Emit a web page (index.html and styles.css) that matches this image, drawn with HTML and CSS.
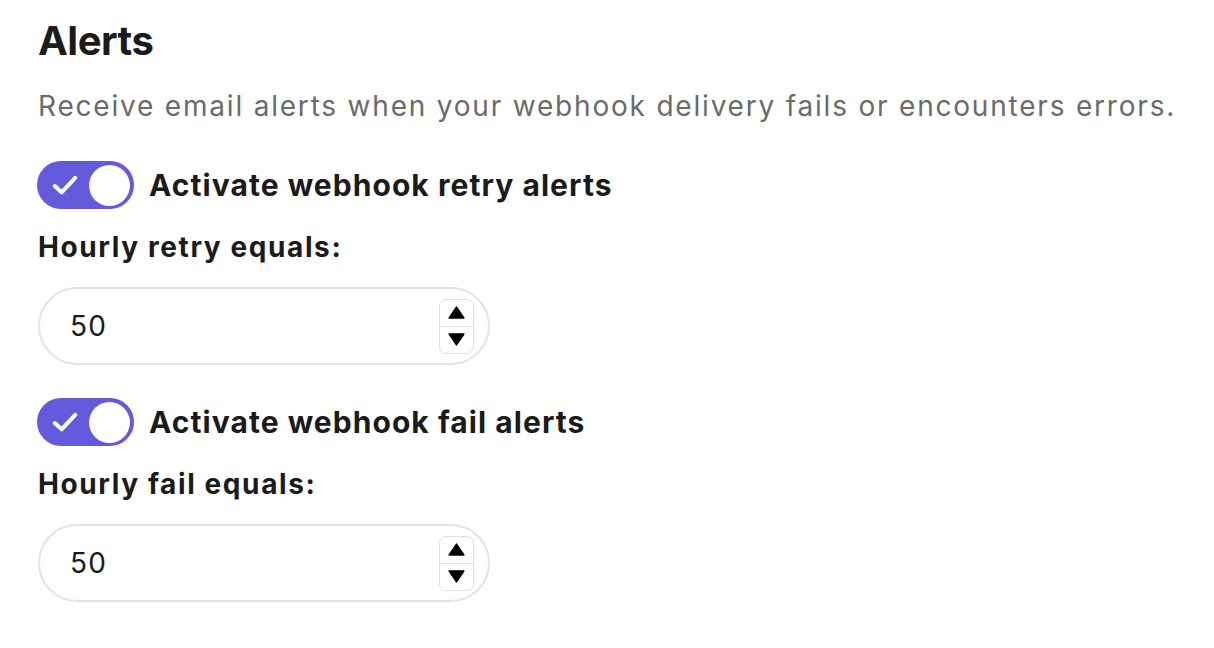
FILE: index.html
```html
<!DOCTYPE html>
<html>
<head>
<meta charset="utf-8">
<link rel="stylesheet" href="styles.css">
</head>
<body>
<section class="alerts">
  <h1 class="title">Alerts</h1>
  <p class="desc">Receive email alerts when your webhook delivery fails or encounters errors.</p>

  <div class="group">
    <div class="toggle-row">
      <span class="toggle">
        <svg class="check" viewBox="0 0 26 20" width="26" height="20"><path d="M2.8 11l6.8 6.3L23.2 2.8" fill="none" stroke="#fff" stroke-width="4" stroke-linecap="round" stroke-linejoin="round"/></svg>
        <span class="knob"></span>
      </span>
      <span class="toggle-label">Activate webhook retry alerts</span>
    </div>
    <div class="field-label">Hourly retry equals:</div>
    <div class="number-input">
      <span class="value">50</span>
      <span class="spinner">
        <span class="spin up"><svg viewBox="0 0 17 13" width="17" height="13"><path d="M8.5 1.2L15.8 12H1.2Z" fill="#000" stroke="#000" stroke-width="1.6" stroke-linejoin="round"/></svg></span>
        <span class="spin down"><svg viewBox="0 0 17 13" width="17" height="13"><path d="M1.2 1H15.8L8.5 11.8Z" fill="#000" stroke="#000" stroke-width="1.6" stroke-linejoin="round"/></svg></span>
      </span>
    </div>
  </div>

  <div class="group">
    <div class="toggle-row">
      <span class="toggle">
        <svg class="check" viewBox="0 0 26 20" width="26" height="20"><path d="M2.8 11l6.8 6.3L23.2 2.8" fill="none" stroke="#fff" stroke-width="4" stroke-linecap="round" stroke-linejoin="round"/></svg>
        <span class="knob"></span>
      </span>
      <span class="toggle-label">Activate webhook fail alerts</span>
    </div>
    <div class="field-label">Hourly fail equals:</div>
    <div class="number-input">
      <span class="value">50</span>
      <span class="spinner">
        <span class="spin up"><svg viewBox="0 0 17 13" width="17" height="13"><path d="M8.5 1.2L15.8 12H1.2Z" fill="#000" stroke="#000" stroke-width="1.6" stroke-linejoin="round"/></svg></span>
        <span class="spin down"><svg viewBox="0 0 17 13" width="17" height="13"><path d="M1.2 1H15.8L8.5 11.8Z" fill="#000" stroke="#000" stroke-width="1.6" stroke-linejoin="round"/></svg></span>
      </span>
    </div>
  </div>
</section>
</body>
</html>
```

FILE: styles.css
```css
* { box-sizing: border-box; }
html, body { margin: 0; padding: 0; background: #fff; }
body {
  font-family: Inter, "Noto Sans", "Liberation Sans", sans-serif;
  color: #1b1b1b;
}
.alerts {
  padding: 17px 37px;
  display: flex;
  flex-direction: column;
}
.title {
  margin: 0 0 0 1px;
  font-size: 40px;
  line-height: 48px;
  font-weight: 700;
  letter-spacing: -0.5px;
}
.desc {
  margin: 21px 0 0 1px;
  font-size: 28px;
  line-height: 40px;
  color: #6b6b6b;
  font-weight: 400;
  letter-spacing: 1.8px;
  white-space: nowrap;
}
.group {
  display: flex;
  flex-direction: column;
  margin-top: 35px;
}
.group + .group { margin-top: 33px; }
.toggle-row {
  display: flex;
  align-items: center;
  gap: 15px;
}
.toggle {
  width: 97px;
  height: 48px;
  border-radius: 24px;
  background: #635bdb;
  display: flex;
  align-items: center;
  justify-content: space-between;
  padding: 0 4px 0 15px;
}
.check { display: block; }
.knob {
  width: 41px;
  height: 41px;
  border-radius: 50%;
  background: #fff;
}
.toggle-label {
  font-size: 30px;
  line-height: 36px;
  font-weight: 700;
  letter-spacing: 1.05px;
}
.field-label {
  margin: 20px 0 0 1px;
  font-size: 28px;
  line-height: 36px;
  font-weight: 700;
  letter-spacing: 1.6px;
}
.number-input {
  margin: 22px 0 0 1px;
  width: 452px;
  height: 78px;
  border: 2px solid #e3e3e3;
  border-radius: 39px;
  display: flex;
  align-items: center;
  justify-content: space-between;
  padding: 0 14px 0 30px;
}
.value {
  font-size: 28px;
  color: #1b1b1b;
  letter-spacing: 1.2px;
}
.spinner {
  width: 35px;
  height: 55px;
  border: 1.5px solid #e0e0e0;
  border-radius: 7px;
  display: flex;
  flex-direction: column;
}
.spin {
  flex: 1;
  display: flex;
  align-items: center;
  justify-content: center;
}
.spin.up { border-bottom: 1.5px solid #e0e0e0; }
.spin svg { display: block; }
```
